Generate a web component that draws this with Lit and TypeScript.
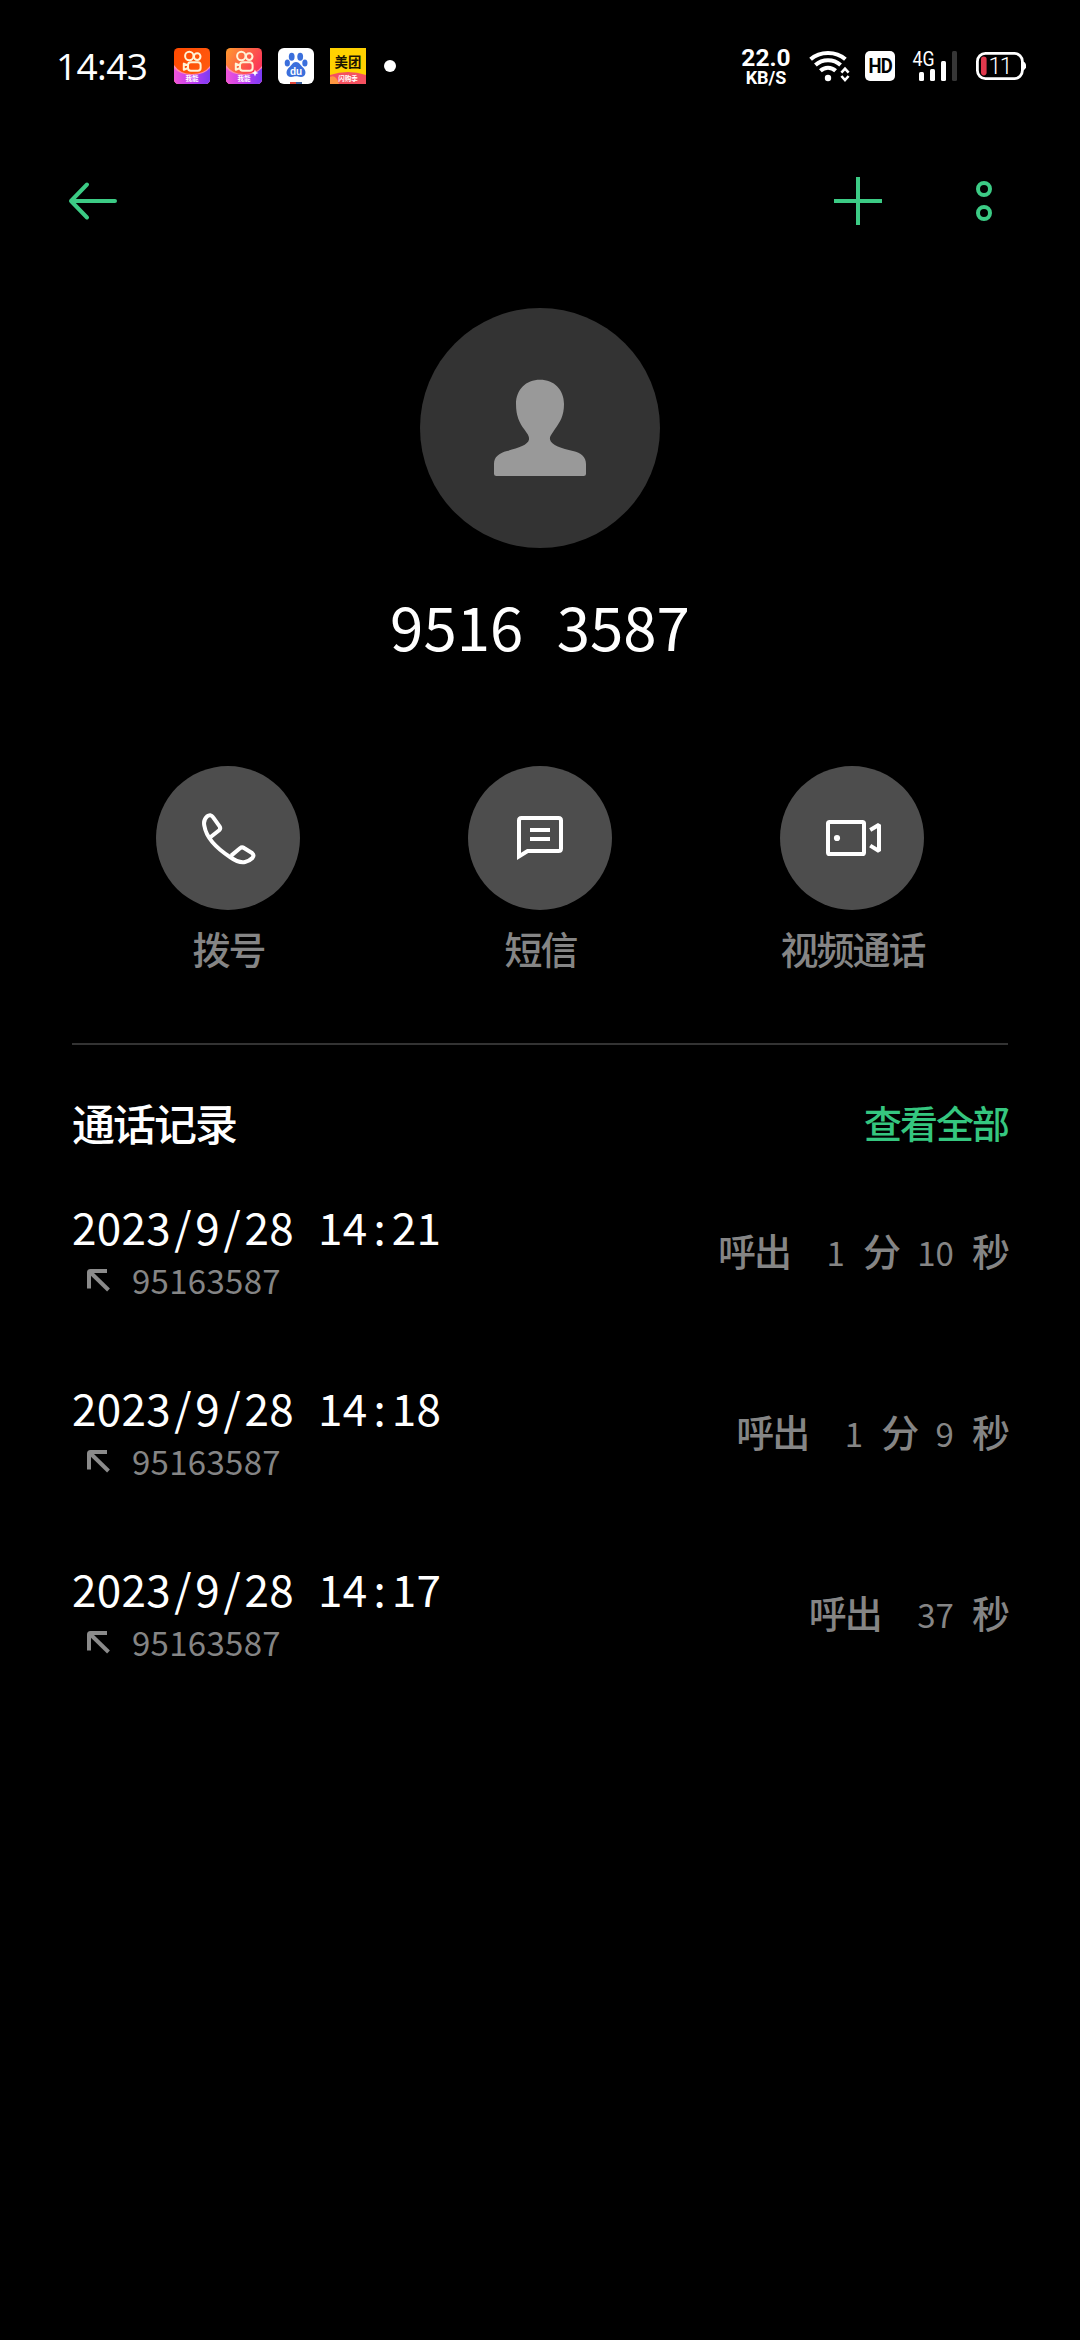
import { LitElement, html, css, svg } from "lit";
import { customElement, property } from "lit/decorators.js";

interface CallRecord {
  time: string;
  number: string;
  duration: string;
}

const RECORDS: CallRecord[] = [
  { time: "2023/9/28 14:21", number: "95163587", duration: "呼出  1 分 10 秒" },
  { time: "2023/9/28 14:18", number: "95163587", duration: "呼出  1 分 9 秒" },
  { time: "2023/9/28 14:17", number: "95163587", duration: "呼出  37 秒" },
];

const kwaiGlyph = svg`
  <g fill="none" stroke="#fff3d6" stroke-width="2">
    <circle cx="15.3" cy="8" r="4.2"></circle>
    <circle cx="23.2" cy="8.6" r="3.3"></circle>
    <rect x="14" y="14.200" width="12.600" height="8.600" rx="2.8"></rect>
    <path d="M14 17.400 L9.800 15.600 V21.800 L14 20" stroke-linejoin="round"></path>
  </g>`;

const kwaiIcon = (id: string, from: string, to: string, spark: boolean) => html`
  <svg class="app" viewBox="0 0 36 36">
    <defs>
      <linearGradient id="${id}a" x1="0" y1="0" x2="1" y2="0.6">
        <stop offset="0" stop-color=${from}></stop><stop offset="1" stop-color=${to}></stop>
      </linearGradient>
      <linearGradient id="${id}b" x1="0" y1="0" x2="1" y2="0">
        <stop offset="0" stop-color="#f055d8"></stop><stop offset="0.5" stop-color="#c23cf0"></stop>
        <stop offset="1" stop-color="#7a3cf5"></stop>
      </linearGradient>
      <clipPath id="${id}c"><rect width="36" height="36" rx="4.5"></rect></clipPath>
    </defs>
    <g clip-path="url(#${id}c)">
      <rect width="36" height="36" fill="url(#${id}a)"></rect>
      <path d="M0 17 Q6 26 18 26 T36 18 V36 H0 Z" fill="#ff8ab0"></path>
      <path d="M0 20 Q6 27 18 27 T36 20 V36 H0 Z" fill="url(#${id}b)"></path>
      ${kwaiGlyph}
      ${spark ? svg`<path d="M29 21.5 L30 24 L32.5 25 L30 26 L29 28.5 L28 26 L25.5 25 L28 24 Z" fill="#fff"></path>` : null}
      <text x="18" y="32.6" class="tiny" text-anchor="middle" fill="#fff">我能</text>
    </g>
  </svg>`;

@customElement("status-bar")
class StatusBar extends LitElement {
  static styles = css`
    :host {
      display: flex;
      align-items: center;
      justify-content: space-between;
      height: 132px;
      padding: 0 54px 0 56px;
      box-sizing: border-box;
      color: #fff;
      font-family: Roboto, sans-serif;
    }
    .side { display: flex; align-items: center; }
    .time {
      width: 118px;
      font-family: "Open Sans", "Noto Sans", sans-serif;
      font-size: 37px;
      line-height: 48px;
      letter-spacing: -0.6px;
    }
    .apps { display: flex; gap: 16px; align-items: center; }
    .app { width: 36px; height: 36px; display: block; }
    .tiny { font: 700 6.5px "Noto Sans CJK SC", sans-serif; }
    .brand { font: 700 13.4px "Noto Sans CJK SC", sans-serif; }
    .du { font: 700 10px "Liberation Sans", sans-serif; }
    .dot { width: 12px; height: 12px; border-radius: 50%; background: #fff; margin-left: 2px; }
    .speed { width: 50px; text-align: center; font-weight: 700; margin-right: 18px; }
    .rate { font-size: 24.5px; line-height: 22px; }
    .unit { font-size: 18px; line-height: 17px; }
    .wifi { width: 42px; height: 36px; margin-right: 14px; }
    .hd {
      width: 30px; height: 30px; border-radius: 5px; background: #fff; color: #000;
      font-size: 21px; font-weight: 700; line-height: 31px; text-align: center;
      letter-spacing: -1px; margin-right: 17px;
    }
    .hd span { display: inline-block; transform: scaleX(0.88); margin: 0 -3px; }
    .cell { width: 46px; height: 36px; margin-right: 16px; }
    .gen { font: 400 20px Roboto, sans-serif; }
    .battery { width: 52px; height: 36px; }
    .level { font: 300 23px Roboto, sans-serif; }
  `;

  render() {
    return html`
      <div class="side">
        <div class="time">14:43</div>
        <div class="apps">
          ${kwaiIcon("k", "#ff4a00", "#ff5a10", false)}
          ${kwaiIcon("l", "#ff9a2e", "#fb2d5c", true)}
          <svg class="app" viewBox="0 0 36 36">
            <rect width="36" height="36" rx="6" fill="#fff"></rect>
            <g fill="#3b6fdc">
              <ellipse cx="13.7" cy="8.7" rx="2.9" ry="4"></ellipse>
              <ellipse cx="22.2" cy="8.7" rx="2.9" ry="4"></ellipse>
              <ellipse cx="9.3" cy="15" rx="2.6" ry="3.6"></ellipse>
              <ellipse cx="26.9" cy="15" rx="2.6" ry="3.6"></ellipse>
              <path d="M18 14 C21.5 14 22.5 17.5 25 19.5 C29 23 28 29 23 29 C20 29 20 28.3 18 28.3 S16 29 13 29 C8 29 7 23 11 19.5 C13.5 17.5 14.5 14 18 14 Z"></path>
            </g>
            <text class="du" x="18" y="27" text-anchor="middle" fill="#fff">du</text>
            <rect x="12" y="34" width="6" height="2" fill="#e0483c"></rect>
            <rect x="18" y="34" width="6" height="2" fill="#3b5f9c"></rect>
          </svg>
          <svg class="app" viewBox="0 0 36 36">
            <rect width="36" height="36" fill="#ffd100"></rect>
            <path d="M0 27 Q18 21 36 27 V36 H0 Z" fill="#f5505f"></path>
            <path d="M0 29 Q6 26 9 36 H0 Z" fill="#ff9640"></path>
            <text class="brand" x="18" y="19.3" text-anchor="middle" fill="#1a1400">美团</text>
            <text class="tiny" x="18" y="33.4" text-anchor="middle" fill="#fff">闪购季</text>
          </svg>
          <div class="dot"></div>
        </div>
      </div>
      <div class="side">
        <div class="speed">
          <div class="rate">22.0</div>
          <div class="unit">KB/S</div>
        </div>
        <svg class="wifi" viewBox="0 0 42 36">
          <g fill="none" stroke="#fff" stroke-width="4">
            <path d="M1.6 11.2 C11 2.8 27 2.8 36.4 11.2"></path>
            <path d="M6.4 17 C13.5 10.6 24.5 10.6 31.6 17"></path>
            <path d="M11.4 22.8 C15.8 18.6 22.2 18.6 26.6 22.8"></path>
          </g>
          <circle cx="19" cy="30" r="3.2" fill="#fff"></circle>
          <path d="M32 24.5 L36 19 L40 24.5 M32 28 L36 33 L40 28" fill="none" stroke="#000" stroke-width="5"></path>
          <path d="M32.4 24.6 L36 20.6 L39.6 24.6 M32.4 28 L36 32 L39.6 28" fill="none" stroke="#fff" stroke-width="2.6"></path>
        </svg>
        <div class="hd"><span>HD</span></div>
        <svg class="cell" viewBox="0 0 46 36">
          <text class="gen" x="0.5" y="17.800" textLength="22" lengthAdjust="spacingAndGlyphs" fill="#fff">4G</text>
          <g fill="#fff">
            <rect x="7" y="24" width="5" height="9" rx="1.5"></rect>
            <rect x="18" y="21" width="5" height="12" rx="1.5"></rect>
            <rect x="29" y="13" width="5" height="20" rx="1.5"></rect>
          </g>
          <rect x="40" y="3" width="5" height="30" rx="1.5" fill="#363636"></rect>
        </svg>
        <svg class="battery" viewBox="0 0 52 36">
          <rect x="3.4" y="5.4" width="45" height="25.2" rx="8" fill="none" stroke="#fff" stroke-width="2.8"></rect>
          <path d="M49 13.5 Q52.2 14.5 52.2 18 T49 22.5 Z" fill="#fff"></path>
          <rect x="7" y="8.6" width="5.6" height="18.8" rx="2.8" fill="#e0384c"></rect>
          <text class="level" x="14.5" y="26" textLength="24" fill="#fff">11</text>
        </svg>
      </div>`;
  }
}

@customElement("action-button")
class ActionButton extends LitElement {
  @property() label = "";
  @property() kind = "call";

  static styles = css`
    :host { display: flex; flex-direction: column; align-items: center; width: 312px; }
    .disc { width: 144px; height: 144px; border-radius: 50%; background: #4d4d4d; }
    .icon { display: block; width: 144px; height: 144px; fill: none; stroke: #fff; stroke-width: 4; }
    .solid { fill: #fff; stroke: none; }
    .label {
      margin-top: 10px;
      font: 500 38px/55px "Noto Sans CJK SC", sans-serif;
      letter-spacing: -2px;
      margin-right: -1px;
      color: #858585;
    }
  `;

  private glyph() {
    if (this.kind === "call")
      return svg`<path stroke-linejoin="round" d="M54 71.5 L63.2 64.2 Q65 62.5 63.6 60.4 L57 51.2 Q54.6 47.6 51 50.4 Q47 54 48.4 60 Q51 76 74 91 Q83 97.4 89 96 Q93.4 95 96.4 92 Q98.6 89.4 96 87 L88 82 Q86 80.6 84 82.2 L75.2 89.6"></path>`;
    if (this.kind === "message")
      return svg`<path d="M51 90.4 V54.5 Q51 52 53.5 52 H90.5 Q93 52 93 54.5 V82.500 Q93 85 90.500 85 H59.600 Z"></path>
        <path d="M62 64 H82 M62 73 H82"></path>`;
    return svg`<rect x="48" y="56" width="36" height="32" rx="1.6"></rect>
      <circle class="solid" cx="57" cy="72" r="3.1"></circle>
      <path stroke-linejoin="bevel" d="M90.200 64 L99 58.800 V85 L90.200 79.600"></path>`;
  }

  render() {
    return html`
      <div class="disc"><svg class="icon" viewBox="0 0 144 144">${this.glyph()}</svg></div>
      <div class="label">${this.label}</div>`;
  }
}

@customElement("call-row")
class CallRow extends LitElement {
  @property({ attribute: false }) record!: CallRecord;

  static styles = css`
    :host {
      display: flex;
      align-items: center;
      justify-content: space-between;
      height: 181px;
      font-family: "Noto Sans CJK SC", sans-serif;
    }
    .time { font-size: 44px; line-height: 54px; color: #fff; letter-spacing: 0.3px; word-spacing: 14px; white-space: nowrap; }
    .sep { display: inline-block; width: 24.4px; text-align: center; word-spacing: 0; }
    .detail { display: flex; align-items: center; height: 54px; padding-left: 14px; }
    .arrow { width: 24px; height: 24px; margin-right: 22px; }
    .number { font-size: 33px; line-height: 54px; color: #858585; letter-spacing: 0.3px; }
    .duration {
      font-size: 38px; line-height: 54px; letter-spacing: -2px; color: #858585; font-weight: 500;
      padding-bottom: 4px; white-space: pre;
    }
    .digits { font-size: 33px; letter-spacing: 0; word-spacing: 10.8px; font-weight: 400; }
  `;

  render() {
    const { time, number, duration } = this.record;
    return html`
      <div>
        <div class="time">${time.split(/([/:])/).map((p) => (/[/:]/.test(p) ? html`<span class="sep">${p}</span>` : p))}</div>
        <div class="detail">
          <svg class="arrow" viewBox="0 0 24 24" fill="none" stroke="#8b8b8b" stroke-width="4">
            <path d="M3 20.500 V4.500 Q3 3 4.500 3 H21"></path>
            <path d="M3.500 3.500 L22.500 22"></path>
          </svg>
          <span class="number">${number}</span>
        </div>
      </div>
      <div class="duration">${duration.split(/([\d ]+)/).map((p) => (/[\d ]/.test(p) ? html`<span class="digits">${p}</span>` : p))}</div>`;
  }
}

@customElement("app-root")
class AppRoot extends LitElement {
  static styles = css`
    :host {
      display: block;
      min-height: 2340px;
      background: #000;
      color: #fff;
      font-family: "Noto Sans CJK SC", sans-serif;
    }
    .toolbar {
      display: flex;
      align-items: center;
      height: 138px;
      padding: 0 72px 0 66px;
    }
    .tool { width: 54px; height: 54px; display: block; fill: none; stroke: #3ccb85; stroke-width: 4; }
    .add { margin-left: auto; margin-right: 69px; }
    .profile { display: flex; flex-direction: column; align-items: center; padding-top: 38px; }
    .avatar { width: 240px; height: 240px; border-radius: 50%; background: #333; }
    .person { display: block; width: 240px; height: 240px; fill: #999; }
    .name {
      margin-top: 37px;
      font-size: 60px;
      line-height: 80px;
      word-spacing: 20px;
    }
    .actions { display: flex; justify-content: center; margin-top: 101px; height: 277px; }
    .history { margin: 0 72px; border-top: 2px solid #333; }
    .heading { display: flex; align-items: center; justify-content: space-between; height: 81px; padding-top: 36px; }
    .title { font-size: 43px; font-weight: 500; letter-spacing: -2px; }
    .all { font-size: 38px; font-weight: 500; letter-spacing: -2px; color: #35c67f; }
  `;

  render() {
    return html`
      <status-bar></status-bar>
      <div class="toolbar">
        <svg class="tool" viewBox="0 0 54 54">
          <path stroke-linecap="round" stroke-linejoin="round" d="M49 27 H5 M21 10.500 L5 27 L21 43.500"></path>
        </svg>
        <svg class="tool add" viewBox="0 0 54 54"><path d="M27 3 V51 M3 27 H51"></path></svg>
        <svg class="tool" viewBox="0 0 54 54">
          <circle cx="30" cy="15" r="6"></circle><circle cx="30" cy="39" r="6"></circle>
        </svg>
      </div>
      <div class="profile">
        <div class="avatar">
          <svg class="person" viewBox="0 0 240 240">
            <path d="M120 71.700 C106 71.700 96 81.500 96 96 C96 108 99.500 115 104 121 C107.500 126 109.500 128 109 131.500 C108 137 98 140 87 143 C79 145 74 149 74 156 V165.500 Q74 168 76.500 168 H163.500 Q166 168 166 165.500 V156 C166 149 161 144.500 153 143 C142 140.500 131 137 130 131.500 C129.500 128 132 126 135 121 C140 114 144 108 144 96 C144 81.500 134 71.700 120 71.700 Z"></path>
          </svg>
        </div>
        <div class="name">9516 3587</div>
      </div>
      <div class="actions">
        <action-button kind="call" label="拨号"></action-button>
        <action-button kind="message" label="短信"></action-button>
        <action-button kind="video" label="视频通话"></action-button>
      </div>
      <div class="history">
        <div class="heading">
          <span class="title">通话记录</span>
          <span class="all">查看全部</span>
        </div>
        ${RECORDS.map((r) => html`<call-row .record=${r}></call-row>`)}
      </div>`;
  }
}
